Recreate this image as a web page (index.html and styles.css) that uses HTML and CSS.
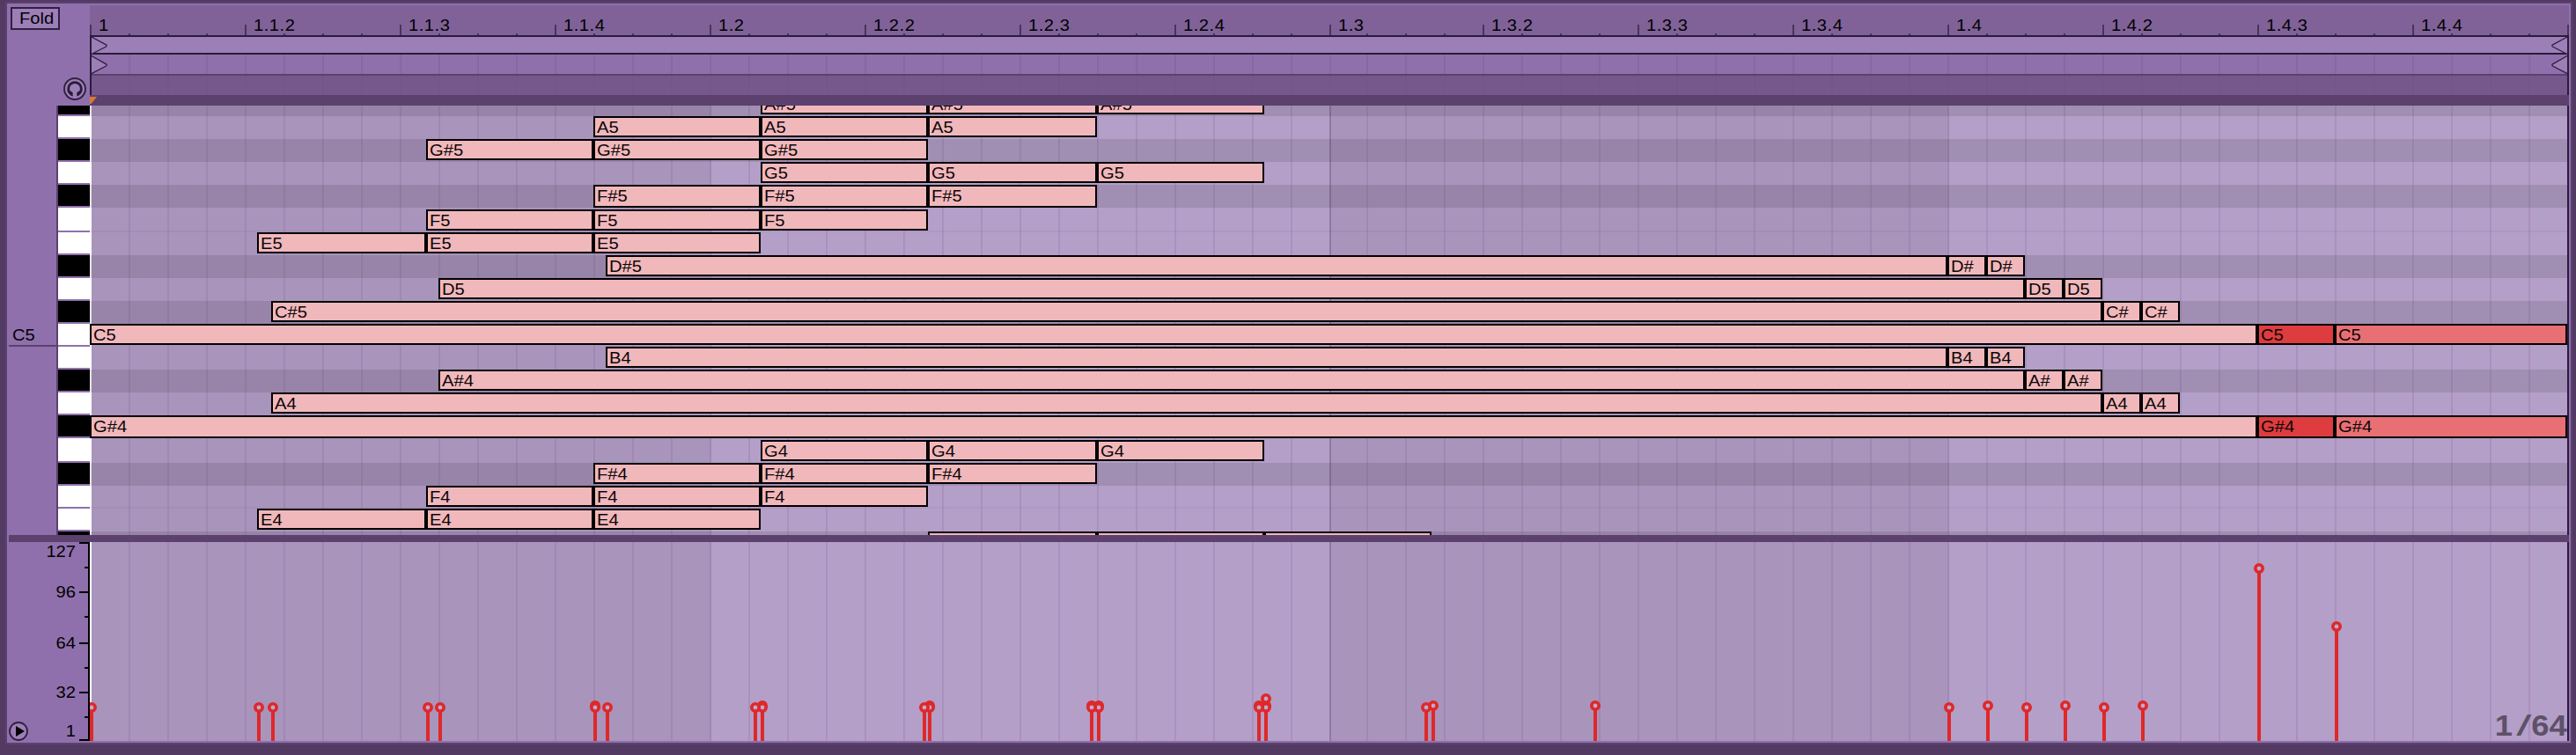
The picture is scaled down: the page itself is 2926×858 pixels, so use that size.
FILE: index.html
```html
<!DOCTYPE html>
<html lang="en">
<head>
<meta charset="utf-8">
<title>Piano Roll</title>
<link rel="stylesheet" href="styles.css">
</head>
<body>
<div class="frame"><div class="rim"><div class="editor">
  <section class="head">
    <div class="head-side">
      <button class="fold"><span class="txt">Fold</span></button>
      <svg class="phones" width="28" height="28" viewBox="0 0 28 28">
        <circle cx="14" cy="14" r="12" fill="#9d7fb8" stroke="#30213f" stroke-width="1.9"/>
        <path d="M8.4 18.6A7.3 7.3 0 1 1 19.6 18.6" fill="none" stroke="#2a1c38" stroke-width="2.8"/>
        <path d="M5.6 15.5L8 16.4C10 16.6 11.7 17.4 11.7 19V22.6C9 22 6.4 19.6 5.6 15.5ZM22.4 15.5L20 16.4C18 16.6 16.3 17.4 16.3 19V22.6C19 22 21.6 19.6 22.4 15.5Z" fill="#2a1c38"/>
      </svg>
    </div>
    <div class="head-main">
      <div class="ruler" id="ruler"></div>
      <div class="bars">
        <div class="bar loop"></div>
        <div class="bar range"><div class="lines faint"></div></div>
        <div class="bar scrub"><div class="lines dim"></div></div>
        <svg class="marks" width="2816" height="46" viewBox="0 0 2816 46">
          <g fill="#9d7fb8" stroke="#2e2142" stroke-width="1.4">
            <path d="M2 1L18.5 9.8Q19.8 11 18.5 12L2 20.5"/>
            <path d="M2 22.5L18.5 31.8Q19.8 33 18.5 34L2 42.7"/>
            <path d="M2814 1L2797.5 9.8Q2796.2 11 2797.5 12L2814 20.5"/>
            <path d="M2814 22.5L2797.5 31.8Q2796.2 33 2797.5 34L2814 42.7"/>
          </g>
        </svg>
      </div>
      <div class="strip"><svg width="10" height="10" viewBox="0 0 10 10"><path d="M0 2H8L1.5 10H0Z" fill="#d97a33"/></svg></div>
    </div>
  </section>
  <section class="roll">
    <div class="octave"><span class="txt">C5</span></div>
    <div class="keys" id="keys"></div>
    <div class="lane">
      <div class="rows" id="rows"></div>
      <div class="lines"></div>
      <div class="rows" id="notes"></div>
    </div>
  </section>
  <div class="divider"></div>
  <section class="velocity">
    <div class="axis">
      <div class="labels">
        <span class="txt l127">127</span><span class="txt l96">96</span><span class="txt l64">64</span><span class="txt l32">32</span><span class="txt l1">1</span>
      </div>
      <svg class="scale" width="12" height="226" viewBox="0 0 12 226">
        <path d="M10 0h2v226h-2zM0 0h12v2H0zM6 28h6v2H6zM0 56h12v2H0zM6 84h6v2H6zM0 114h12v2H0zM6 142h6v2H6zM0 170h12v2H0zM6 198h6v2H6zM0 224h12v2H0z"/>
      </svg>
      <svg class="play" width="24" height="24" viewBox="0 0 24 24">
        <circle cx="12" cy="12" r="10" fill="#9d7fb8" stroke="#30213f" stroke-width="1.8"/>
        <path d="M9 6L19 12L9 18Z"/>
      </svg>
    </div>
    <div class="lane">
      <div class="lines"></div>
      <svg class="stems" id="stems" width="2816" height="226" viewBox="0 0 2816 226"></svg>
      <div class="grid-size"><span>1</span><span class="slash">/</span><span>64</span></div>
    </div>
  </section>
</div></div></div>
<script src="script.js"></script>
</body>
</html>
```
FILE: styles.css
```css
* { box-sizing: border-box; }
body { margin: 0; font-family: "Liberation Sans", Arial, sans-serif; font-size: 18px; line-height: 18px; color: #000; }
.frame { width: 2926px; height: 858px; background: #523a63; padding: 2px 4px 12px 6px; overflow: hidden; }
.rim { background: #5c416f; padding: 2px; }
.editor { background: #9070ac; padding: 2px 2px 2px 0; }
.txt { display: inline-block; transform: scaleX(1.12); transform-origin: 0 0; white-space: nowrap; }

.head { display: flex; height: 114px; }
.head-side { width: 94px; padding: 2px 3px 0 4px; display: flex; flex-direction: column; }
.fold { width: 56px; height: 26px; border: 2px solid #30213f; border-radius: 0; background: #9d7fb8; font: inherit; color: #000; padding: 2px 0 0 8px; text-align: left; display: flex; }
.phones { align-self: flex-end; margin-top: 53px; }
.head-main { width: 2816px; }
.ruler { height: 34px; background: #806299; display: flex; align-items: flex-end; overflow: hidden; }
.tick { flex: none; width: 44px; height: 2px; border-left: 2px solid #493557; }
.tick.short { width: 42px; }
.tick.major { height: 12px; }
.tick .txt { display: block; width: 70px; margin: -8px 0 0 8px; letter-spacing: .45px; }
.bars { position: relative; border: solid #281c3c; border-width: 2px 2px 0; height: 68px; background: #9d7fb8; }
.loop { height: 20px; border-bottom: 2px solid #281c3c; }
.range { height: 24px; background: #9070ac; border-bottom: 2px solid #5c416f; }
.scrub { height: 22px; background: #76588c; }
.marks { position: absolute; left: -2px; top: -1px; }
.strip { height: 12px; background: #5c416f; display: flex; }

.lines { display: flex; height: 100%; }
.lines i { flex: none; width: 44px; border-right: 2px solid rgba(112, 64, 128, .15); }
.lines i.short { width: 42px; }
.lines i.bar { border-color: rgba(80, 50, 100, .28); }
.lines.faint i { border-color: #8868a4; }
.lines.dim i { border-color: #73568a; }
.lines i:last-child { border: 0; width: 42px; }

.roll { display: flex; height: 488px; overflow: hidden; }
.octave { width: 56px; height: 274px; margin-left: 2px; padding: 252px 0 0 4px; border-bottom: 2px solid #5c416f; }
.keys { width: 36px; box-shadow: -2px 0 #5c416f; background: #9070ac; }
.key { background: #fff; border-bottom: 2px solid #9070ac; }
.key.black { background: #000; }
.lane { position: relative; width: 2816px; overflow: hidden; padding-left: 2px; border-right: 2px solid #281c3c;
  background: linear-gradient(90deg, #fff 2px, #a994bc 2px 706px, #b49fc8 706px 1408px, #a994bc 1408px 2112px, #b49fc8 2112px) padding-box; }
.rows { position: absolute; inset: 0; }
.row.dark { background: rgba(0, 0, 0, .1); }
.row.seam { box-shadow: inset 0 -2px rgba(80, 50, 100, .06); }
.note { position: absolute; border: 2px solid #000; background: #f1b8bc; overflow: hidden; padding: 2px 0 0 2px; color: #0c0606; }
.note .txt { display: block; }
.note.mid { background: #e87074; }
.note.strong { background: #de3c3e; }

.divider { height: 8px; margin-left: 2px; background: #5c416f; }
.velocity { display: flex; height: 226px; }
.axis { position: relative; width: 94px; display: flex; justify-content: flex-end; }
.labels { width: 60px; padding: 2px 4px 0 0; display: flex; flex-direction: column; align-items: flex-end; }
.labels .txt { transform-origin: 100% 0; }
.l96 { margin-top: 28px; }
.l64 { margin-top: 40px; }
.l32 { margin-top: 38px; }
.l1 { margin-top: 26px; }
.play { position: absolute; left: 1px; bottom: -1px; }
.stems { position: absolute; left: 0; top: 0; }
.grid-size { position: absolute; right: 0; bottom: 1px; font-size: 34px; line-height: 34px; font-weight: bold; color: #5d5168; display: flex; transform: scaleX(1.07); transform-origin: 100% 0; }
.slash { width: 16px; text-align: center; transform: scaleX(1.7); font-weight: normal; margin: 0 0 0 4px; }
```
FILE: script.js
```js
const el = (cls, parent, tag = 'div') => {
  const e = document.createElement(tag);
  e.className = cls;
  parent.append(e);
  return e;
};
const label = (text, parent) => { el('txt', parent, 'span').textContent = text; };

// Ruler: 64 divisions, a named tick every fourth one
const rulerBox = document.getElementById('ruler');
for (let k = 0; k < 64; k++) {
  const major = k % 4 === 0;
  const t = el('tick' + (major ? ' major' : '') + (k === 32 ? ' short' : ''), rulerBox);
  if (major) {
    const beat = Math.floor(k / 16) + 1, sub = (k % 16) / 4 + 1;
    label(k === 0 ? '1' : sub === 1 ? '1.' + beat : '1.' + beat + '.' + sub, t);
  }
}
el('tick major', rulerBox);

document.querySelectorAll('.lines').forEach(box => {
  for (let k = 0; k < 64; k++) {
    el((k === 32 ? 'short' : '') + (k === 31 ? 'bar' : ''), box, 'i');
  }
});

// Pitch rows: name and height
const pitches = [
  ['A#5', 12], ['A5', 26], ['G#5', 26], ['G5', 26], ['F#5', 26], ['F5', 28], ['E5', 26],
  ['D#5', 26], ['D5', 26], ['C#5', 26], ['C5', 26], ['B4', 26], ['A#4', 26], ['A4', 26],
  ['G#4', 26], ['G4', 28], ['F#4', 26], ['F4', 26], ['E4', 26], ['D#4', 4]
];
const rowBox = document.getElementById('rows');
const keyBox = document.getElementById('keys');
const noteBox = document.getElementById('notes');
const rowTop = {};
let rowY = 0;
for (const [name, h] of pitches) {
  const black = name.includes('#');
  const row = el('row' + (black ? ' dark' : '') + (name[0] === 'F' && !black ? ' seam' : ''), rowBox);
  row.style.height = h + 'px';
  const key = el('key' + (black ? ' black' : ''), keyBox);
  key.style.height = h + 'px';
  if (name === 'D#4') key.style.border = 0;
  rowTop[name] = rowY;
  rowY += h;
}
rowTop['A#5'] = -14;
rowTop.F5 += 2;
rowTop.G4 += 2;

const notes = {
  'A#5': [864, 1054, 1246, 1436],
  'A5': [674, 864, 1054, 1246],
  'G#5': [484, 674, 864, 1054],
  'G5': [864, 1054, 1246, 1436],
  'F#5': [674, 864, 1054, 1246],
  'F5': [484, 674, 864, 1054],
  'E5': [292, 484, 674, 864],
  'D#5': [688, 2212, 2256, 2300],
  'D5': [498, 2300, 2344, 2388],
  'C#5': [308, 2388, 2432, 2476],
  'C5': [102, 2564, 2652, 2916],
  'B4': [688, 2212, 2256, 2300],
  'A#4': [498, 2300, 2344, 2388],
  'A4': [308, 2388, 2432, 2476],
  'G#4': [102, 2564, 2652, 2916],
  'G4': [864, 1054, 1246, 1436],
  'F#4': [674, 864, 1054, 1246],
  'F4': [484, 674, 864, 1054],
  'E4': [292, 484, 674, 864],
  'D#4': [1054, 1246, 1436, 1626]
};
for (const [name, xs] of Object.entries(notes)) {
  for (let i = 0; i < 3; i++) {
    const full = name === 'C5' || name === 'G#4';
    const n = el('note' + (full && i === 1 ? ' strong' : full && i === 2 ? ' mid' : ''), noteBox);
    const w = xs[i + 1] - xs[i];
    n.style.left = xs[i] - 102 + 'px';
    n.style.top = rowTop[name] + 'px';
    n.style.width = w + 'px';
    n.style.height = (name === 'F#5' || name === 'G#4' ? 26 : 24) + 'px';
    if (name !== 'D#4') label(w < 60 ? name.slice(0, 2) : name, n);
  }
}

// Velocity stems: x, then head heights
const stems = [
  [104, 804], [294, 804], [310, 804], [486, 804], [500, 804], [676, 802, 804], [690, 804],
  [866, 802, 804], [858, 804], [1056, 802, 804], [1050, 804], [1248, 802, 804], [1240, 802, 804],
  [1438, 802, 804, 794], [1430, 802, 804], [1628, 802], [1620, 804], [1812, 802],
  [2214, 804], [2258, 802], [2302, 804], [2346, 802], [2390, 804], [2434, 802], [2566, 646], [2654, 712]
];
let drawn = '';
for (const [x, ...ys] of stems) {
  const cx = x - 102;
  const head = Math.max(...ys) - 616 + 4;
  drawn += `<rect x="${cx - 2}" y="${head}" width="4" height="${226 - head}" fill="#df2829"/>`;
  for (const v of ys) drawn += `<circle cx="${cx}" cy="${v - 616}" r="4.2" fill="#bda9cc" stroke="#df2829" stroke-width="3.6"/>`;
}
document.getElementById('stems').innerHTML = drawn;
```
